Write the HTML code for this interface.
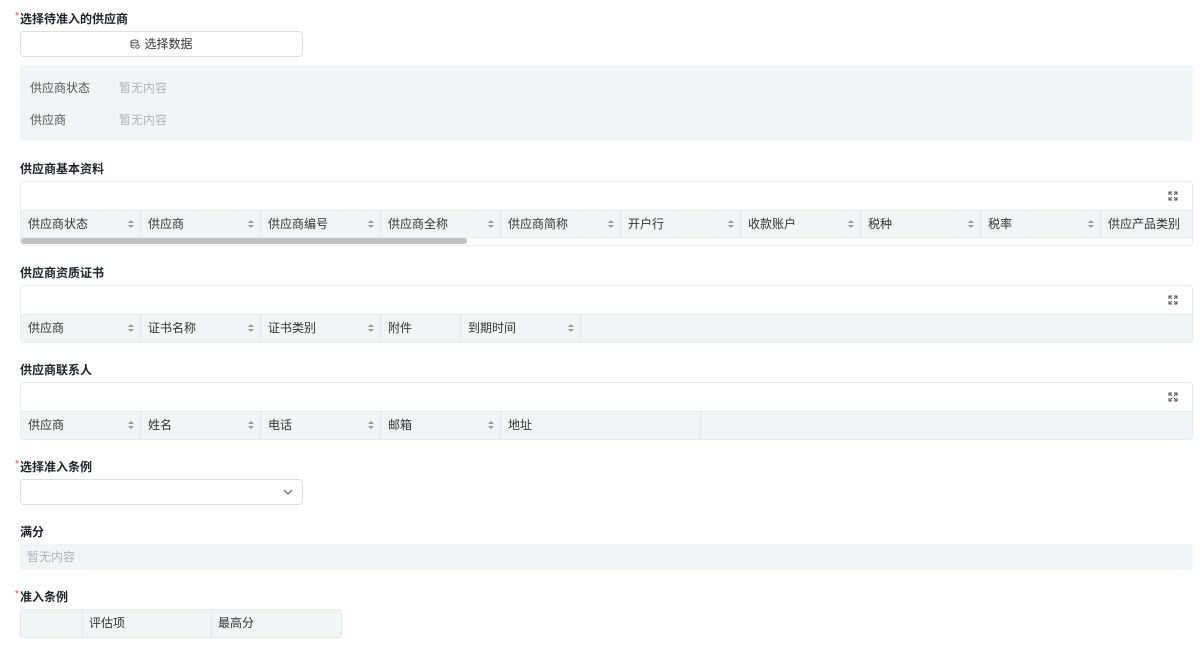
<!DOCTYPE html><html><head><meta charset="utf-8"><style>
*{box-sizing:border-box;margin:0;padding:0}
body{width:1200px;height:656px;background:#fff;font-family:"Liberation Sans","Noto Sans CJK SC",sans-serif;font-size:12px;color:#333;position:relative;overflow:hidden}
.a{position:absolute}
.lbl{position:absolute;left:20px;font-weight:bold;color:#1f2329;font-size:12px;line-height:14px}
.req:before{content:"*";color:#f04b4b;font-weight:normal;position:absolute;left:-5px;top:-2px;font-size:10px}
.box{position:absolute;left:20px;width:1173px;border:1px solid #e8eaed;border-radius:4px;background:#fff}
.hdr{position:absolute;left:0;right:0;background:#f3f4f6;border-top:1px solid #e8eaed;border-bottom:1px solid #e8eaed;display:flex;height:28px}
.c{width:120px;border-right:1px solid #e4e6ea;padding-left:7px;line-height:26px;position:relative;color:#333;flex:none}
.s:after{content:"";position:absolute;right:6px;top:9px;width:0;height:0;border-left:3px solid transparent;border-right:3px solid transparent;border-bottom:3px solid #999}
.s:before{content:"";position:absolute;right:6px;top:14px;width:0;height:0;border-left:3px solid transparent;border-right:3px solid transparent;border-top:3px solid #999}
.ex{position:absolute;right:14px;top:9px;width:10px;height:10px}
.gray{color:#b0b3b8}
</style></head><body>
<div class="lbl req" style="top:12px">选择待准入的供应商</div>
<div class="a" style="left:20px;top:31px;width:283px;height:26px;border:1px solid #dcdfe4;border-radius:4px;text-align:center;line-height:24px;color:#333">
<svg width="10" height="10" viewBox="0 0 10 10" style="vertical-align:-1px;margin-right:4px"><ellipse cx="4.5" cy="2.5" rx="3.5" ry="1.5" fill="none" stroke="#555"/><path d="M1 2.5v5c0 .8 1.6 1.5 3.5 1.5M8 2.5v2M1 5c0 .8 1.6 1.5 3.5 1.5" fill="none" stroke="#555"/><circle cx="7.5" cy="7.5" r="1.8" fill="none" stroke="#555"/></svg>选择数据</div>
<div class="a" style="left:20px;top:65px;width:1173px;height:76px;background:#f3f4f6;border-radius:4px"></div>
<div class="a" style="left:30px;top:79px;color:#555">供应商状态</div><div class="a gray" style="left:119px;top:79px">暂无内容</div>
<div class="a" style="left:30px;top:111px;color:#555">供应商</div><div class="a gray" style="left:119px;top:111px">暂无内容</div>

<div class="lbl" style="top:162px">供应商基本资料</div>
<div class="box" style="top:181px;height:65px;overflow:hidden">
<svg class="ex" viewBox="0 0 10 10" fill="none" stroke="#555"><path d="M1 4V1h3M1 1l3 3M6 1h3v3M9 1L6 4M1 6v3h3M1 9l3-3M9 6v3H6M9 9L6 6"/></svg>
<div class="hdr" style="top:28px"><div class="c s">供应商状态</div><div class="c s">供应商</div><div class="c s">供应商编号</div><div class="c s">供应商全称</div><div class="c s">供应商简称</div><div class="c s">开户行</div><div class="c s">收款账户</div><div class="c s">税种</div><div class="c s">税率</div><div class="c">供应产品类别</div></div>
<div class="a" style="left:0;top:56px;width:446px;height:6px;background:#c1c1c1;border-radius:3px"></div>
</div>

<div class="lbl" style="top:266px">供应商资质证书</div>
<div class="box" style="top:285px;height:58px;overflow:hidden">
<svg class="ex" viewBox="0 0 10 10" fill="none" stroke="#555"><path d="M1 4V1h3M1 1l3 3M6 1h3v3M9 1L6 4M1 6v3h3M1 9l3-3M9 6v3H6M9 9L6 6"/></svg>
<div class="hdr" style="top:28px;border-bottom:none"><div class="c s">供应商</div><div class="c s">证书名称</div><div class="c s">证书类别</div><div class="c" style="width:80px">附件</div><div class="c s">到期时间</div></div>
</div>

<div class="lbl" style="top:363px">供应商联系人</div>
<div class="box" style="top:382px;height:58px;overflow:hidden">
<svg class="ex" viewBox="0 0 10 10" fill="none" stroke="#555"><path d="M1 4V1h3M1 1l3 3M6 1h3v3M9 1L6 4M1 6v3h3M1 9l3-3M9 6v3H6M9 9L6 6"/></svg>
<div class="hdr" style="top:28px;border-bottom:none"><div class="c s">供应商</div><div class="c s">姓名</div><div class="c s">电话</div><div class="c s">邮箱</div><div class="c" style="width:200px">地址</div></div>
</div>

<div class="lbl req" style="top:460px">选择准入条例</div>
<div class="a" style="left:20px;top:479px;width:283px;height:26px;border:1px solid #dcdfe4;border-radius:4px">
<svg class="a" style="right:9px;top:9px" width="10" height="6" viewBox="0 0 10 6"><path d="M1 1l4 4 4-4" fill="none" stroke="#555"/></svg></div>

<div class="lbl" style="top:525px">满分</div>
<div class="a gray" style="left:20px;top:544px;width:1173px;height:26px;background:#f3f4f6;border-radius:3px;padding-left:7px;line-height:26px">暂无内容</div>

<div class="lbl req" style="top:590px">准入条例</div>
<div class="a" style="left:20px;top:609px;width:322px;height:29px;background:#f3f4f6;border:1px solid #e4e6ea;border-radius:3px;display:flex">
<div style="width:62px;border-right:1px solid #e4e6ea"></div><div style="width:129px;border-right:1px solid #e4e6ea;padding-left:6px;line-height:27px">评估项</div><div style="padding-left:6px;line-height:27px">最高分</div></div>
</body></html>
